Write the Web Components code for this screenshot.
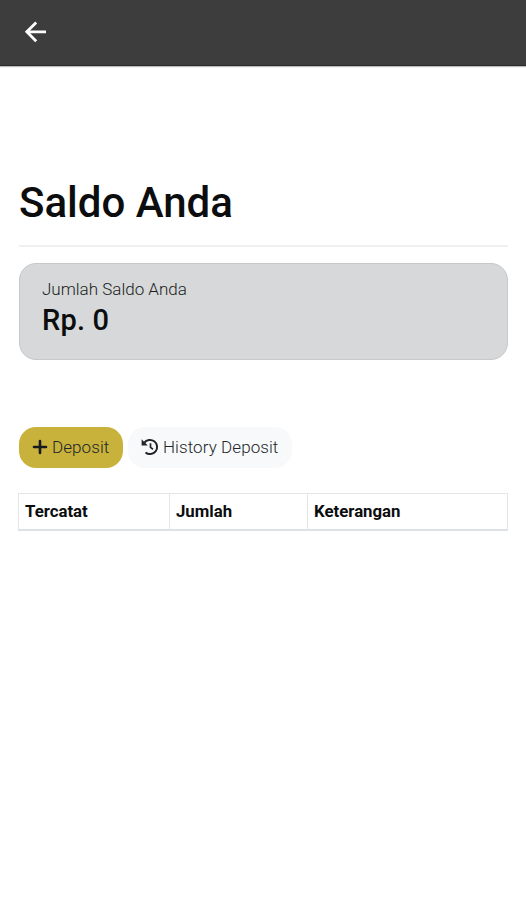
<!DOCTYPE html>
<html lang="id">
<head>
<meta charset="UTF-8">
<meta name="viewport" content="width=device-width, initial-scale=1.0">
<title>Saldo Anda</title>
<style>
  body {
    margin: 0;
    background: #fff;
    color: #0b0d0e;
    font-family: Roboto, 'Liberation Sans', sans-serif;
  }
</style>
</head>
<body>
<saldo-page></saldo-page>
<script>
class AppBar extends HTMLElement {
    constructor() {
        super();
        this.shadowDOM = this.attachShadow({ mode: "open" });
    }
    connectedCallback() {
        this.shadowDOM.innerHTML = `
      <style>
        :host {
          display: flex;
          align-items: center;
          box-sizing: border-box;
          height: 66px;
          padding: 0 24px 1px;
          background: #3d3d3d;
          border-bottom: 1px solid #2b2b2b;
          box-shadow: 0 1px 1px #bdbdbd;
        }
        svg {
          display: block;
        }
      </style>
      <svg width="24" height="24" viewBox="0 0 24 24" fill="none" stroke="#fff" stroke-width="2.8">
        <path d="M22 11.8H3M12.2 2.4L2.8 11.8L12.2 21.2"/>
      </svg>
    `;
    }
}
customElements.define("app-bar", AppBar);

class PageTitle extends HTMLElement {
    constructor() {
        super();
        this.shadowDOM = this.attachShadow({ mode: "open" });
    }
    connectedCallback() {
        this.shadowDOM.innerHTML = `
      <style>
        :host {
          display: block;
          border-bottom: 2px solid #f0f0f0;
        }
        h1 {
          margin: 0;
          padding-bottom: 17px;
          font-size: 42px;
          line-height: 50px;
          font-weight: 500;
        }
      </style>
      <h1><slot></slot></h1>
    `;
    }
}
customElements.define("page-title", PageTitle);

class BalanceCard extends HTMLElement {
    constructor() {
        super();
        this.shadowDOM = this.attachShadow({ mode: "open" });
    }
    connectedCallback() {
        this.shadowDOM.innerHTML = `
      <style>
        :host {
          display: block;
          box-sizing: border-box;
          height: 97px;
          margin-top: 16px;
          padding: 13px 22px;
          background: #d6d8d9;
          border: 1px solid #c6c8ca;
          border-radius: 17px;
        }
        .label {
          font-size: 17px;
          line-height: 24px;
          font-weight: 300;
          color: #1b1e21;
        }
        .amount {
          font-size: 29px;
          line-height: 38px;
          font-weight: 500;
          letter-spacing: 0.2px;
        }
      </style>
      <div class="label">${this.getAttribute("label")}</div>
      <div class="amount"><slot></slot></div>
    `;
    }
}
customElements.define("balance-card", BalanceCard);

class PillButton extends HTMLElement {
    constructor() {
        super();
        this.shadowDOM = this.attachShadow({ mode: "open" });
    }
    connectedCallback() {
        this.shadowDOM.innerHTML = `
      <style>
        :host {
          display: block;
        }
        button {
          display: flex;
          align-items: center;
          gap: 4px;
          width: 100%;
          height: 41px;
          margin: 0;
          padding: 0 0 2px 13px;
          border: 0;
          border-radius: 17px;
          background: #f8f9fa;
          color: #212529;
          font: 300 17px Roboto, 'Liberation Sans', sans-serif;
          letter-spacing: 0.08px;
          white-space: nowrap;
        }
        :host([variant="gold"]) button {
          background: #c9b23c;
        }
      </style>
      <button type="button"><slot name="icon"></slot><span><slot></slot></span></button>
    `;
    }
}
customElements.define("pill-button", PillButton);

class SaldoTable extends HTMLElement {
    constructor() {
        super();
        this.shadowDOM = this.attachShadow({ mode: "open" });
    }
    connectedCallback() {
        const columns = this.getAttribute("columns").split(",");
        this.shadowDOM.innerHTML = `
      <style>
        :host {
          display: block;
          margin-top: 25px;
          margin-left: -1px;
        }
        .head {
          display: grid;
          grid-template-columns: 150px 138px 1fr;
          box-sizing: border-box;
          height: 38px;
          border: 1px solid #e4e7e9;
          border-bottom: 2px solid #dee2e6;
        }
        .head span {
          padding-left: 6px;
          font-size: 16.8px;
          line-height: 35px;
          font-weight: 700;
        }
        .head span + span {
          border-left: 1px solid #e4e7e9;
        }
      </style>
      <div class="head">${columns.map((c) => `<span>${c}</span>`).join("")}</div>
    `;
    }
}
customElements.define("saldo-table", SaldoTable);

class SaldoPage extends HTMLElement {
    constructor() {
        super();
        this.shadowDOM = this.attachShadow({ mode: "open" });
    }
    connectedCallback() {
        this.shadowDOM.innerHTML = `
      <style>
        :host {
          display: block;
          min-height: 900px;
        }
        main {
          padding: 112px 18px 0 19px;
        }
        .actions {
          display: flex;
          gap: 5px;
          margin-top: 67px;
        }
        .deposit {
          width: 104px;
        }
        .history {
          width: 164px;
        }
        svg {
          display: block;
          flex: none;
        }
      </style>
      <app-bar></app-bar>
      <main>
        <page-title>Saldo Anda</page-title>
        <balance-card label="Jumlah Saldo Anda">Rp. 0</balance-card>
        <div class="actions">
          <pill-button class="deposit" variant="gold">
            <svg slot="icon" width="16" height="16" viewBox="0 0 16 16" fill="none" stroke="#171a1c" stroke-width="2.6" stroke-linecap="round">
              <path d="M8 2V14M2 8H14"/>
            </svg>
            Deposit
          </pill-button>
          <pill-button class="history">
            <svg slot="icon" width="18" height="18" viewBox="0 0 18 18" fill="none" stroke="#212529" stroke-width="2">
              <path d="M3.2 4.9A7.1 7.1 0 1 1 4.5 14.5"/>
              <path d="M0.6 1.2V7.4H6.8Z" fill="#212529" stroke="none"/>
              <path d="M9.5 5.3V9.4L12 11.2" stroke-width="1.7"/>
            </svg>
            History Deposit
          </pill-button>
        </div>
        <saldo-table columns="Tercatat,Jumlah,Keterangan"></saldo-table>
      </main>
    `;
    }
}
customElements.define("saldo-page", SaldoPage);
</script>
</body>
</html>
